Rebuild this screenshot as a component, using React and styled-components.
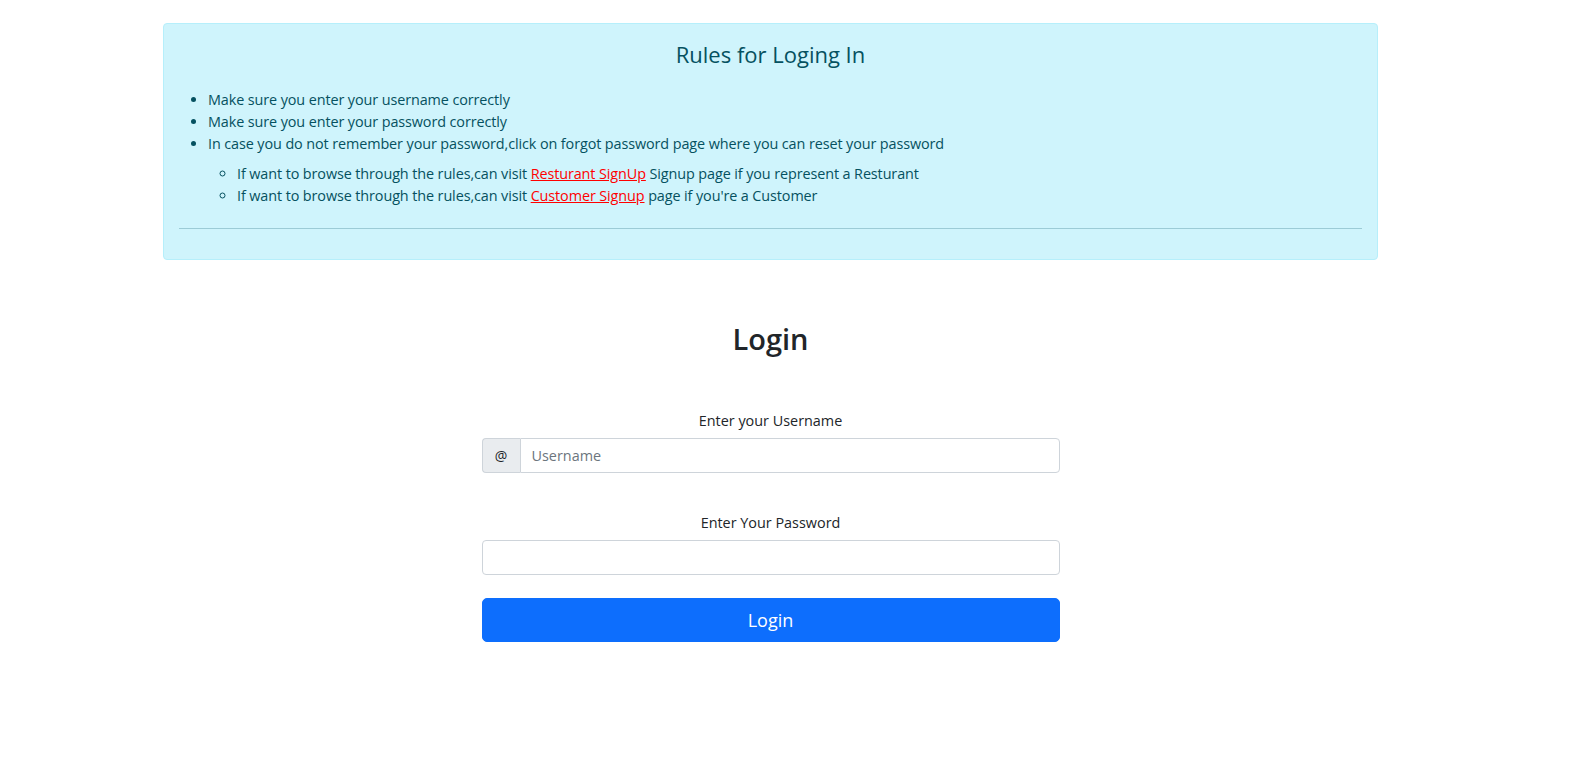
import React from 'react'
import styled, { createGlobalStyle } from 'styled-components'

const GlobalStyle = createGlobalStyle`
  * {
    box-sizing: border-box;
  }

  body {
    margin: 0;
    background: #fff;
    color: #212529;
    font-family: 'Open Sans', 'Noto Sans', sans-serif;
    font-size: 14.4px;
    line-height: 1.5;
  }
`

const Page = styled.div`
  /* content is centred a bit left of the window middle */
  padding: 23px 36px 60px 0;
  display: flex;
  flex-direction: column;
  align-items: center;
`

const Alert = styled.div`
  width: 1215px;
  padding: 17px 15px 14px;
  background-color: #cff4fc;
  border: 1px solid #b6effb;
  border-radius: 4px;
  color: #055160;
`

const AlertHeading = styled.h4`
  margin: 0 0 22px;
  text-align: center;
  font-size: 22px;
  font-weight: 500;
  line-height: 26px;
  color: #055160;
`

const List = styled.ul`
  margin: ${props => (props.nested ? '8px 0 0' : '0')};
  padding-left: 29px;
  list-style-type: ${props => (props.nested ? 'circle' : 'disc')};
  line-height: 22px;
  letter-spacing: -0.1px;
`

const Item = styled.li`
  font-size: 14.4px;
`

const RedLink = styled.a`
  color: red;
  text-decoration: underline;
`

const Divider = styled.hr`
  margin: 21px 0 16px;
  border: 0;
  border-top: 1px solid #9ccbd6;
  opacity: 1;
`

const Title = styled.h2`
  margin: 61px 0 0;
  font-size: 29px;
  font-weight: 600;
  line-height: 36px;
  color: #212529;
`

const Form = styled.form`
  width: 578px;
  margin-top: 53px;
  display: flex;
  flex-direction: column;
`

const Label = styled.label`
  display: block;
  text-align: center;
  font-size: 14.4px;
  line-height: 22px;
  margin-top: ${props => props.top || 0}px;
  margin-bottom: 6px;
`

const InputGroup = styled.div`
  display: flex;
  width: 100%;
  height: 35px;
`

const Addon = styled.span`
  display: flex;
  align-items: center;
  justify-content: center;
  flex: none;
  width: 38px;
  background-color: #e9ecef;
  border: 1px solid #ced4da;
  border-right: 0;
  border-radius: 4px 0 0 4px;
  font-size: 14px;
  font-weight: 400;
  color: #212529;
`

const Input = styled.input`
  flex: ${props => (props.grouped ? '1 1 auto' : 'none')};
  width: 100%;
  height: 35px;
  padding: 0 11px;
  border: 1px solid #ced4da;
  border-radius: ${props => (props.grouped ? '0 4px 4px 0' : '4px')};
  font-family: inherit;
  font-size: 14.4px;
  color: #212529;
  background: #fff;
  outline: 0;

  &::placeholder {
    color: #6c757d;
  }
`

const Submit = styled.button`
  margin-top: 23px;
  width: 100%;
  height: 44px;
  border: 1px solid #0d6efd;
  border-radius: 5px;
  background-color: #0d6efd;
  color: #fff;
  font-family: inherit;
  font-size: 18px;
  cursor: pointer;
`

function App() {
  return (
    <Page>
      <GlobalStyle />
      <Alert>
        <AlertHeading>Rules for Loging In</AlertHeading>
        <List>
          <Item>Make sure you enter your username correctly</Item>
          <Item>Make sure you enter your password correctly</Item>
          <Item>
            In case you do not remember your password,click on forgot password page where you can reset your password
            <List nested>
              <Item>
                If want to browse through the rules,can visit <RedLink href="#">Resturant SignUp</RedLink> Signup page if you represent a Resturant
              </Item>
              <Item>
                If want to browse through the rules,can visit <RedLink href="#">Customer Signup</RedLink> page if you're a Customer
              </Item>
            </List>
          </Item>
        </List>
        <Divider />
      </Alert>

      <Title>Login</Title>

      <Form onSubmit={e => e.preventDefault()}>
        <Label>Enter your Username</Label>
        <InputGroup>
          <Addon>@</Addon>
          <Input grouped type="text" placeholder="Username" />
        </InputGroup>

        <Label top={39}>Enter Your Password</Label>
        <Input type="password" />

        <Submit type="submit">Login</Submit>
      </Form>
    </Page>
  )
}

export default App
